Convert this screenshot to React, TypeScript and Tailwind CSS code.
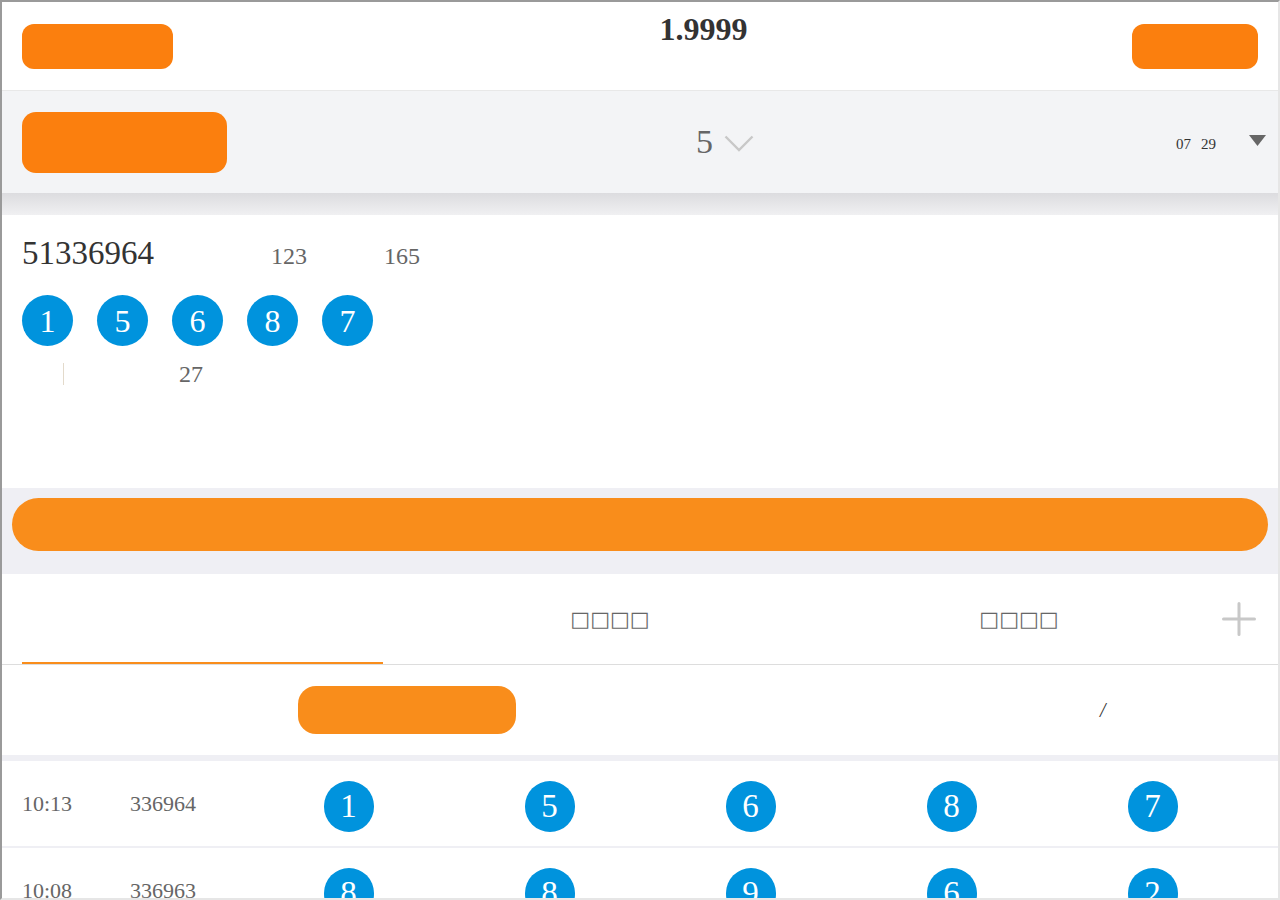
import React from "react";

const topBalls = [1, 5, 6, 8, 7];

const draws = [
  { time: "10:13", code: "336964", balls: [1, 5, 6, 8, 7] },
  { time: "10:08", code: "336963", balls: [8, 8, 9, 6, 2] },
];

function Ball({ n, big }: { n: number; big?: boolean }) {
  return (
    <div
      className={`flex items-center justify-center rounded-full bg-[#0093dd] text-white leading-none ${
        big ? "h-[51px] w-[51px] text-[32px]" : "h-[51px] w-[50px] text-[33px]"
      }`}
    >
      {n}
    </div>
  );
}

export default function App() {
  return (
    <div className="h-[900px] w-[1280px] overflow-hidden border-2 border-t-[#9a9a9a] border-l-[#9a9a9a] border-r-[#e6e6e6] border-b-[#e6e6e6] bg-white font-['Liberation_Serif',serif]">
      {/* header */}
      <div className="flex h-[89px] items-center border-b border-[#e8e8e8] px-[20px]">
        <button className="block h-[45px] w-[151px] rounded-[12px] bg-[#fb7f0e]" />
        <div className="flex flex-1 justify-center self-start pl-[102px] pt-[11px]">
          <span className="text-[32px] font-bold leading-none text-[#333]">1.9999</span>
        </div>
        <button className="block h-[45px] w-[126px] rounded-[12px] bg-[#fb7f0e]" />
      </div>

      {/* period bar */}
      <div className="flex h-[102px] items-center bg-[#f3f4f6] pl-[20px] pr-[12px]">
        <button className="block h-[61px] w-[205px] rounded-[14px] bg-[#fb7f0e]" />
        <div className="ml-[469px] flex items-center">
          <span className="text-[34px] leading-none text-[#666]">5</span>
          <svg className="ml-[11px] mt-[2px]" width="30" height="17" viewBox="0 0 30 17" fill="none">
            <path d="M1.5 1.5 L15 15 L28.5 1.5" stroke="#c8c8c8" strokeWidth="2.4" />
          </svg>
        </div>
        <div className="ml-auto flex items-center">
          <span className="mt-[4px] text-[15px] leading-none text-[#333]">07</span>
          <span className="ml-[10px] mt-[4px] text-[15px] leading-none text-[#333]">29</span>
          <svg className="ml-[33px] mb-[3px]" width="17" height="11" viewBox="0 0 17 11">
            <path d="M0 0 H17 L8.5 11 Z" fill="#666" />
          </svg>
        </div>
      </div>
      <div className="h-[22px] bg-gradient-to-b from-[#dcdcdf] to-[#f0f0f2]" />

      {/* latest result */}
      <div className="h-[273px] px-[20px] pt-[22px]">
        <div className="flex items-baseline">
          <span className="text-[33px] leading-none text-[#333]">51336964</span>
          <span className="ml-[117px] text-[24px] leading-none text-[#666]">123</span>
          <span className="ml-[77px] text-[24px] leading-none text-[#666]">165</span>
        </div>
        <div className="mt-[25px] flex gap-[24px]">
          {topBalls.map((n, i) => (
            <Ball key={i} n={n} big />
          ))}
        </div>
        <div className="mt-[17px] flex h-[22px] items-center">
          <div className="ml-[41px] h-[22px] w-px bg-[#e3dacb]" />
          <span className="ml-[115px] text-[24px] leading-none text-[#666]">27</span>
        </div>
      </div>

      {/* main action */}
      <div className="bg-[#efeff4] px-[10px] pb-[23px] pt-[10px]">
        <button className="block h-[53px] w-full rounded-full bg-[#f98d1b]" />
      </div>

      {/* tabs */}
      <div className="flex h-[91px] items-stretch border-b border-[#dddddd]">
        <div className="ml-[20px] w-[361px] border-b-2 border-[#f98d1b]" />
        <div className="ml-[21px] flex w-[412px] items-center justify-center font-['DejaVu_Sans',sans-serif] text-[21px] leading-none text-[#666]">
          □□□□
        </div>
        <div className="flex w-[406px] items-center justify-center font-['DejaVu_Sans',sans-serif] text-[21px] leading-none text-[#666]">
          □□□□
        </div>
        <div className="flex items-center">
          <svg width="34" height="34" viewBox="0 0 34 34" fill="none">
            <path d="M17 1.5 V32.5 M1.5 17 H32.5" stroke="#c8c8c8" strokeWidth="3" strokeLinecap="round" />
          </svg>
        </div>
      </div>

      {/* filter row */}
      <div className="flex h-[90px] items-center pl-[296px]">
        <button className="block h-[48px] w-[218px] rounded-[18px] bg-[#f98d1b]" />
        <span className="ml-[584px] text-[20px] italic leading-none text-[#333]">/</span>
      </div>
      <div className="h-[6px] bg-[#efeff4]" />

      {/* history */}
      {draws.map((d, i) => (
        <div key={d.code}>
          {i > 0 && <div className="h-[2px] bg-[#efeff4]" />}
          <div className="grid h-[85px] grid-cols-[108px_118px_repeat(5,201px)] items-center pl-[20px]">
            <span className="text-[22px] leading-none text-[#666]">{d.time}</span>
            <span className="text-[22px] leading-none text-[#666]">{d.code}</span>
            {d.balls.map((n, j) => (
              <div key={j} className="flex justify-center pt-[6px]">
                <Ball n={n} />
              </div>
            ))}
          </div>
        </div>
      ))}
    </div>
  );
}
